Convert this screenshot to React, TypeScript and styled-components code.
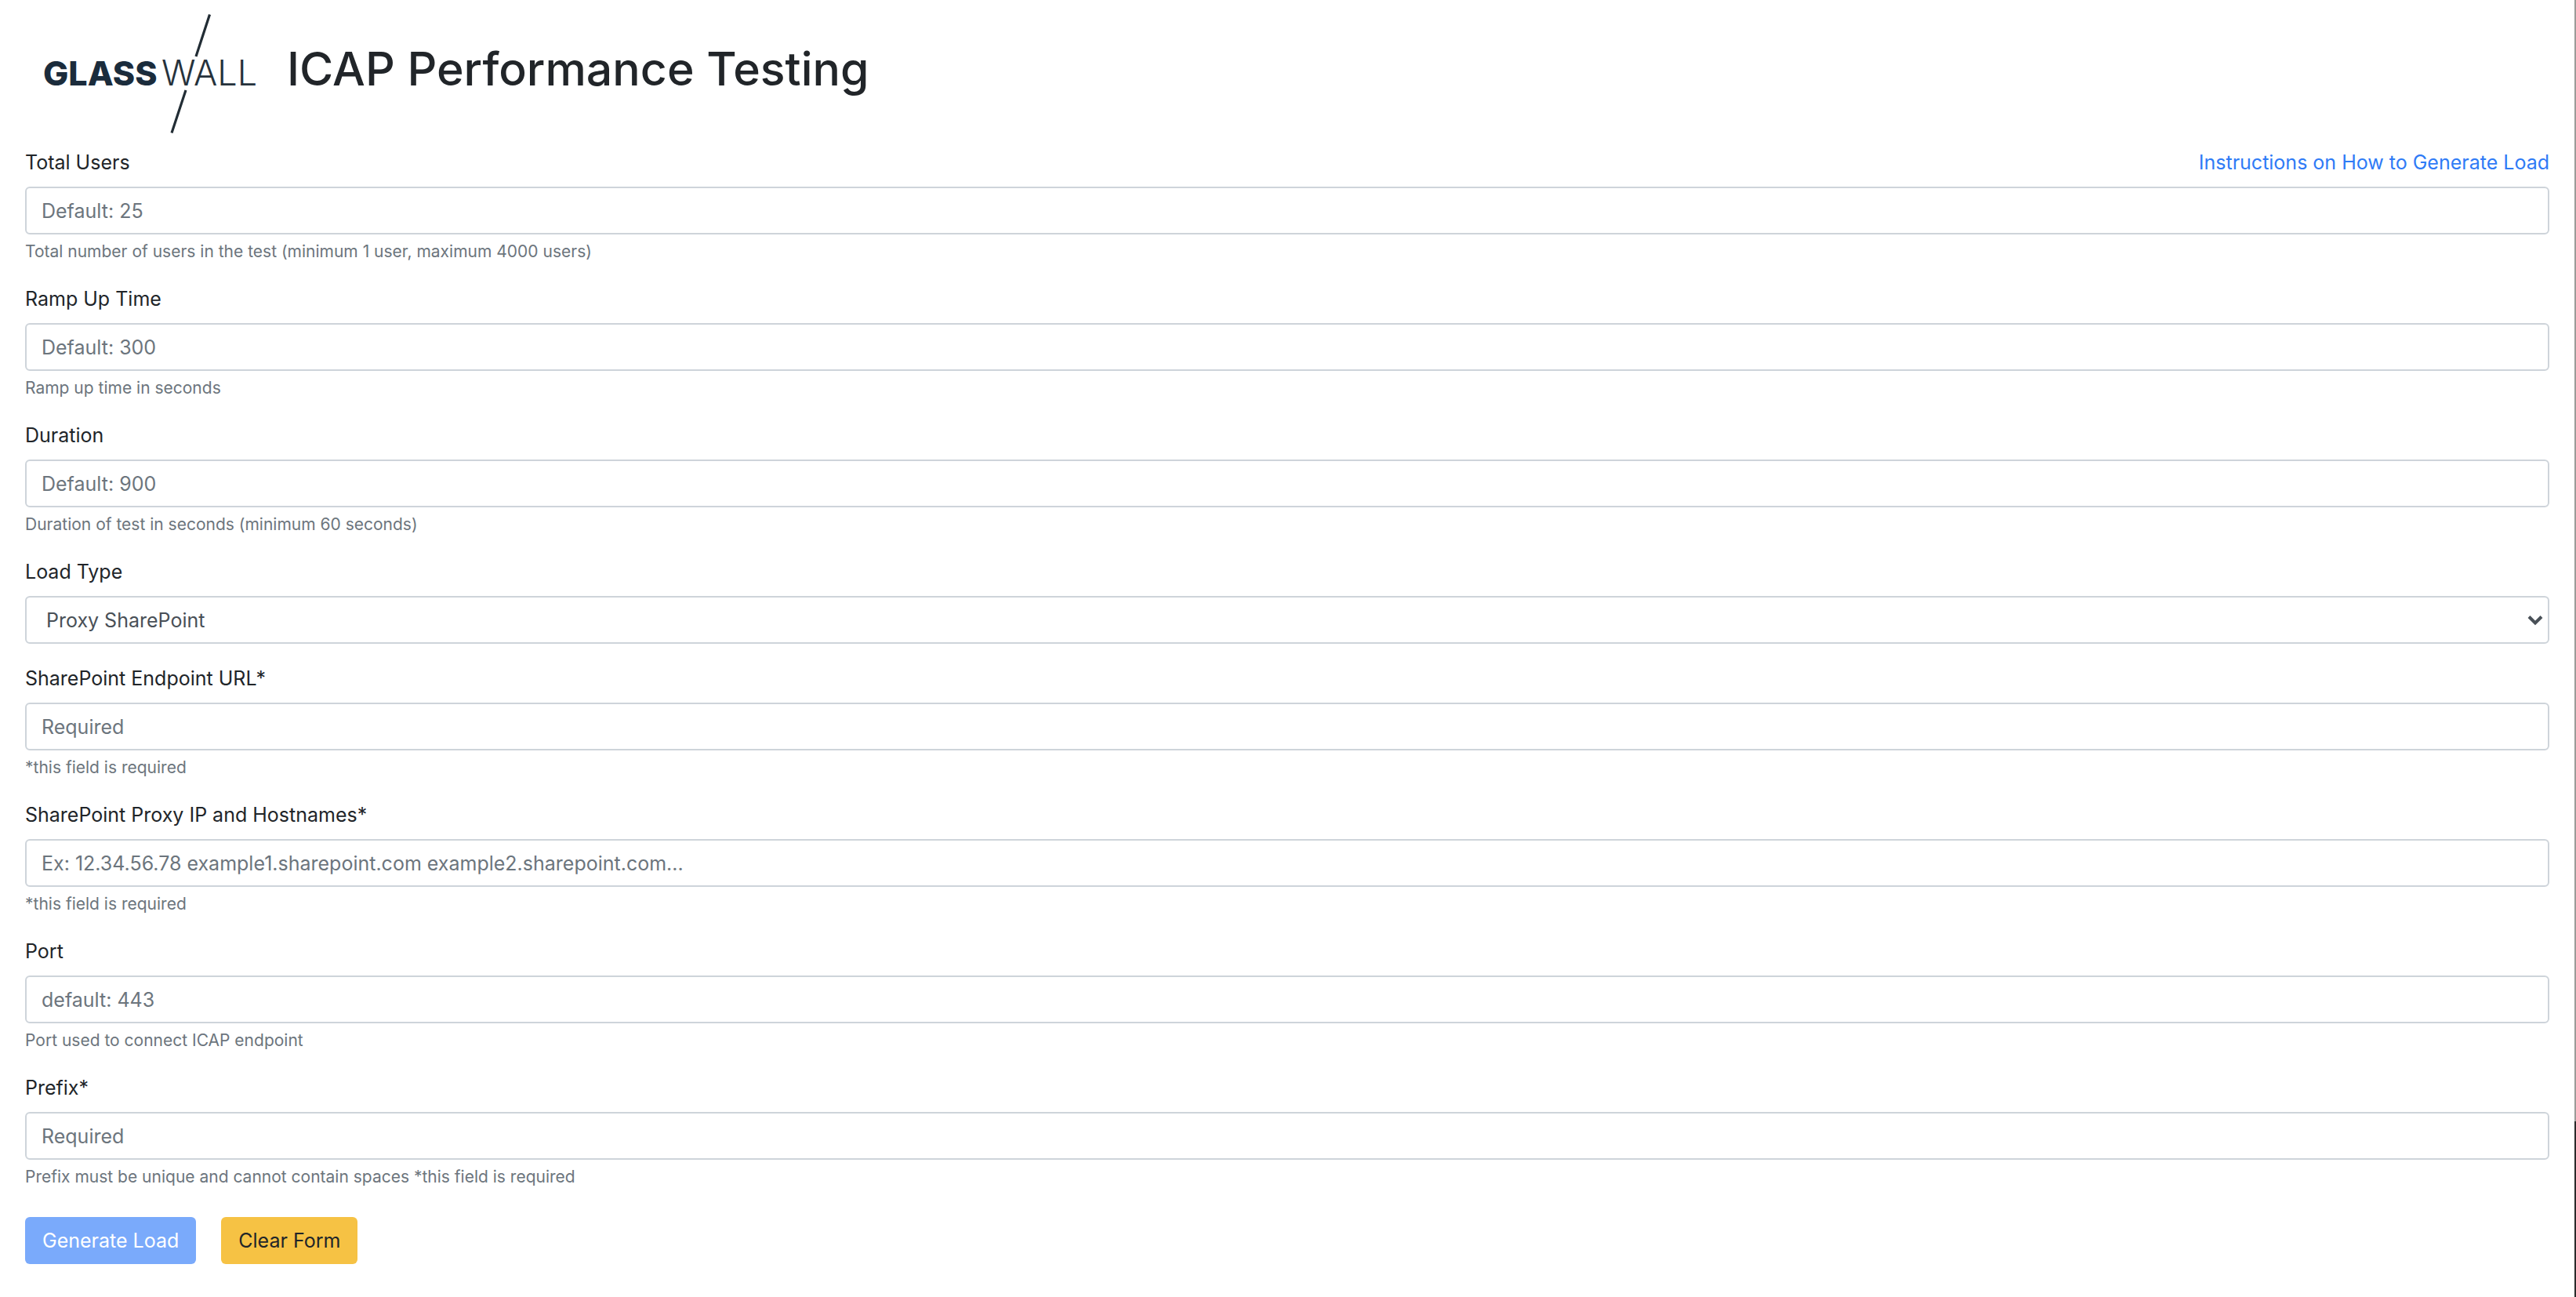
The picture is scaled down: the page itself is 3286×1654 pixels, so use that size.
import React from "react";
import styled, { createGlobalStyle } from "styled-components";

const sans = `Inter, "Liberation Sans", sans-serif`;

const GlobalStyle = createGlobalStyle`
  *, *::before, *::after { box-sizing: border-box; }
  body {
    margin: 0;
    background: #fff;
    color: #212529;
    font-family: ${sans};
    font-size: 25px;
    line-height: 38px;
  }
`;

const Shell = styled.div`
  display: flex;
  min-height: 100vh;
`;

const Page = styled.main`
  flex: 1;
  min-width: 0;
  padding: 0 32px;
`;

const Edge = styled.div`
  display: flex;
  flex-direction: column;
  width: 2px;
`;

const EdgePart = styled.div<{ $grow: number; $color: string }>`
  flex: ${(p) => p.$grow} 0 0;
  background: ${(p) => p.$color};
`;

const Header = styled.header`
  display: flex;
  align-items: flex-start;
  gap: 20px;
  height: 188px;
`;

const Logo = styled.svg`
  display: block;
  flex: none;
  width: 314px;
  height: 187px;
`;

const Title = styled.h1`
  margin: 50px 0 0;
  font-size: 59px;
  font-weight: 500;
  line-height: 76px;
`;

const Group = styled.div`
  margin-bottom: 25px;
`;

const LabelRow = styled.div`
  display: flex;
  justify-content: space-between;
  margin-bottom: 12px;
`;

const DocLink = styled.a`
  color: #2f7bf6;
  text-decoration: none;
`;

const controlStyle = `
  display: block;
  width: 100%;
  height: 61px;
  border: 2px solid #ced4da;
  border-radius: 6px;
  background: #fff;
  color: #495057;
  font-family: ${sans};
  font-size: 25px;
  line-height: 38px;
`;

const TextBox = styled.input`
  ${controlStyle}
  padding: 0 19px;
  &::placeholder { color: #6c757d; opacity: 1; }
`;

const SelectWrap = styled.div`
  position: relative;
`;

const Select = styled.select`
  ${controlStyle}
  appearance: none;
  padding: 0 25px;
`;

const Chevron = styled.svg`
  position: absolute;
  top: 24px;
  right: 8px;
  width: 20px;
  height: 14px;
  pointer-events: none;
`;

const Help = styled.small`
  display: block;
  margin-top: 6px;
  color: #6c757d;
  font-size: 21px;
  line-height: 32px;
`;

const Actions = styled.div`
  display: flex;
  gap: 32px;
  padding-top: 10px;
`;

const Button = styled.button<{ $bg: string; $fg: string }>`
  height: 60px;
  padding: 0 22px;
  border: 0;
  border-radius: 6px;
  background: ${(p) => p.$bg};
  color: ${(p) => p.$fg};
  font-family: ${sans};
  font-size: 25px;
  line-height: 38px;
`;

function GlasswallLogo() {
  return (
    <Logo viewBox="32 0 314 187" role="img" aria-label="Glasswall">
      <text x="55" y="109" fontFamily="Inter, sans-serif" fontSize="43" fontWeight="800" fill="#1b2c3c">
        GLASS
      </text>
      <text x="206" y="109" fontFamily="Inter, sans-serif" fontSize="45" fontWeight="300" fill="#26323c">
        WALL
      </text>
      <path d="M267.5 18.5L250 72M237 115L219 169.5" fill="none" stroke="#222d35" strokeWidth="3.2" />
    </Logo>
  );
}

type FieldProps = {
  id: string;
  label: string;
  placeholder: string;
  help: string;
  aside?: React.ReactNode;
};

function Field({ id, label, placeholder, help, aside }: FieldProps) {
  return (
    <Group>
      <LabelRow>
        <label htmlFor={id}>{label}</label>
        {aside}
      </LabelRow>
      <TextBox id={id} type="text" placeholder={placeholder} aria-describedby={`${id}-help`} />
      <Help id={`${id}-help`}>{help}</Help>
    </Group>
  );
}

export default function App() {
  return (
    <Shell>
      <GlobalStyle />
      <Page>
        <Header>
          <GlasswallLogo />
          <Title>ICAP Performance Testing</Title>
        </Header>
        <form onSubmit={(e) => e.preventDefault()}>
          <Field
            id="total-users"
            label="Total Users"
            placeholder="Default: 25"
            help="Total number of users in the test (minimum 1 user, maximum 4000 users)"
            aside={<DocLink href="#instructions">Instructions on How to Generate Load</DocLink>}
          />
          <Field id="ramp-up" label="Ramp Up Time" placeholder="Default: 300" help="Ramp up time in seconds" />
          <Field
            id="duration"
            label="Duration"
            placeholder="Default: 900"
            help="Duration of test in seconds (minimum 60 seconds)"
          />
          <Group>
            <LabelRow>
              <label htmlFor="load-type">Load Type</label>
            </LabelRow>
            <SelectWrap>
              <Select id="load-type" defaultValue="Proxy SharePoint">
                <option>Direct</option>
                <option>Proxy Offline</option>
                <option>Proxy SharePoint</option>
              </Select>
              <Chevron viewBox="0 0 20 14" aria-hidden="true">
                <path d="M2 2.5L10 10.5L18 2.5" fill="none" stroke="#495057" strokeWidth="4" />
              </Chevron>
            </SelectWrap>
          </Group>
          <Field
            id="endpoint-url"
            label="SharePoint Endpoint URL*"
            placeholder="Required"
            help="*this field is required"
          />
          <Field
            id="proxy-hosts"
            label="SharePoint Proxy IP and Hostnames*"
            placeholder="Ex: 12.34.56.78 example1.sharepoint.com example2.sharepoint.com..."
            help="*this field is required"
          />
          <Field id="port" label="Port" placeholder="default: 443" help="Port used to connect ICAP endpoint" />
          <Field
            id="prefix"
            label="Prefix*"
            placeholder="Required"
            help="Prefix must be unique and cannot contain spaces *this field is required"
          />
          <Actions>
            <Button type="submit" $bg="#7aaafb" $fg="#fff">
              Generate Load
            </Button>
            <Button type="reset" $bg="#f6c244" $fg="#212529">
              Clear Form
            </Button>
          </Actions>
        </form>
      </Page>
      <Edge aria-hidden="true">
        <EdgePart $grow={1430} $color="#9b9b99" />
        <EdgePart $grow={224} $color="#2b2b2b" />
      </Edge>
    </Shell>
  );
}
